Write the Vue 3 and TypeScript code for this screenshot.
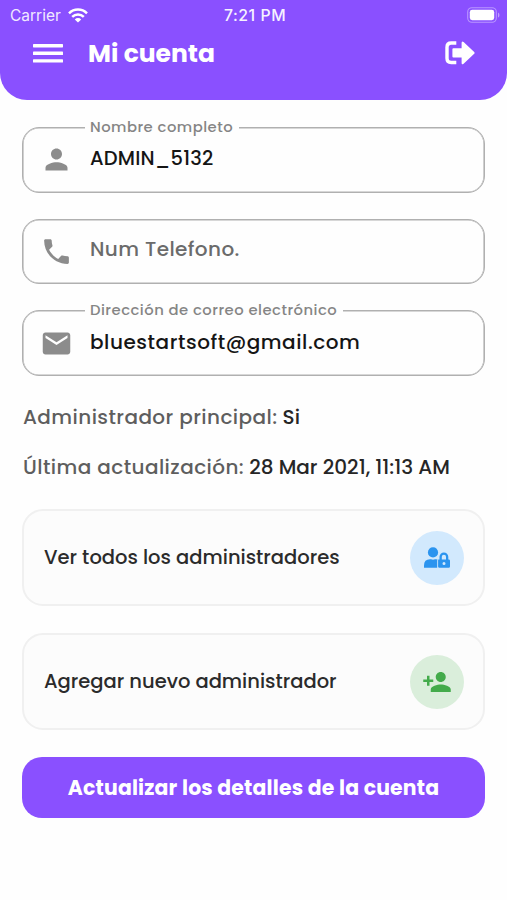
<script setup lang="ts">
interface Field {
  id: string
  label: string
  value: string
  icon: string
}

const fields: Field[] = [
  {
    id: 'name',
    label: 'Nombre completo',
    value: 'ADMIN_5132',
    icon: 'M12 12c2.21 0 4-1.79 4-4s-1.79-4-4-4-4 1.79-4 4 1.79 4 4 4zm0 2c-2.67 0-8 1.34-8 4v2h16v-2c0-2.66-5.33-4-8-4z',
  },
  {
    id: 'phone',
    label: 'Num Telefono.',
    value: '',
    icon: 'M6.62 10.79c1.44 2.83 3.76 5.14 6.59 6.59l2.2-2.2c.27-.27.67-.36 1.02-.24 1.12.37 2.33.57 3.57.57.55 0 1 .45 1 1V20c0 .55-.45 1-1 1-9.39 0-17-7.61-17-17 0-.55.45-1 1-1h3.5c.55 0 1 .45 1 1 0 1.25.2 2.45.57 3.57.11.35.03.74-.25 1.02l-2.2 2.2z',
  },
  {
    id: 'email',
    label: 'Dirección de correo electrónico',
    value: 'bluestartsoft@gmail.com',
    icon: 'M20 4H4c-1.1 0-1.99.9-1.99 2L2 18c0 1.1.9 2 2 2h16c1.1 0 2-.9 2-2V6c0-1.1-.9-2-2-2zm0 4l-8 5-8-5V6l8 5 8-5v2z',
  },
]
</script>

<template>
  <div class="screen">
    <header class="header">
      <div class="status">
        <div class="carrier">
          <span class="carrier-name">Carrier</span>
          <svg class="wifi" viewBox="0 0 20 15" fill="none" stroke="#fff" stroke-width="2.5">
            <path d="M1 5.3a12.8 12.8 0 0 1 18 0" />
            <path d="M4.2 8.9a8.3 8.3 0 0 1 11.6 0" />
            <path d="M10 14.6 6.8 11.4a4.6 4.6 0 0 1 6.4 0z" fill="#fff" stroke="none" />
          </svg>
        </div>
        <span class="clock">7:21 PM</span>
        <svg class="battery" viewBox="0 0 33 16">
          <rect x="0.7" y="0.7" width="28.6" height="14.6" rx="4.2" fill="none" stroke="#fff" stroke-opacity=".4" stroke-width="1.1" />
          <rect x="2.8" y="2.8" width="24.4" height="10.4" rx="2.4" fill="#fff" />
          <path d="M31 5.4c1.9.7 1.9 4.5 0 5.2z" fill="#fff" opacity=".45" />
        </svg>
      </div>
      <div class="bar">
        <svg class="menu" viewBox="0 0 30 19" fill="#fff">
          <rect width="30" height="3.4" y="0" rx=".6" />
          <rect width="30" height="3.4" y="7.6" rx=".6" />
          <rect width="30" height="3.4" y="15.2" rx=".6" />
        </svg>
        <h1 class="title">Mi cuenta</h1>
        <svg class="logout" viewBox="0 0 30 24">
          <path d="M11.3 2H6.2Q2 2 2 6.2v11.1q0 4.2 4.2 4.2h5.1" fill="none" stroke="#fff" stroke-width="3.4" />
          <path d="M8.4 7.3h8.2V2q0-2.5 2-1l10.6 10.1q.8.8 0 1.6L18.6 22.8q-2 1.5-2-1v-5.2H8.4q-1 0-1-1V8.3q0-1 1-1z" fill="#fff" />
        </svg>
      </div>
    </header>

    <main class="content">
      <div class="fields">
        <div v-for="f in fields" :key="f.id" class="field" :class="f.id">
          <span v-if="f.value" class="label">{{ f.label }}</span>
          <svg class="field-icon" viewBox="0 0 24 24"><path :d="f.icon" fill="#8c8c8c" /></svg>
          <span v-if="f.value" class="value">{{ f.value }}</span>
          <span v-else class="value placeholder">{{ f.label }}</span>
        </div>
      </div>

      <p class="info role"><span class="key">Administrador principal:</span><span class="data">Si</span></p>
      <p class="info updated"><span class="key">Última actualización:</span><span class="data">28 Mar 2021, 11:13 AM</span></p>

      <div class="cards">
        <div class="card view">
          <span class="card-text">Ver todos los administradores</span>
          <span class="badge blue">
            <svg width="26" height="22" viewBox="0 0 26 22" fill="#2b94ef">
              <circle cx="9" cy="5.4" r="5.1" />
              <path d="M0 20.7v-2.2q0-6.3 6-6.3h1q2 .9 4 0h1q.8 0 1.5.2-.3.6-.3 1.4v6.9z" />
              <path fill-rule="evenodd" d="M14.3 12.4h1.2V9.8a4.4 4.4 0 0 1 8.8 0v2.6h.4q1.3 0 1.3 1.3v5.7q0 1.3-1.3 1.3H15.400q-1.3 0-1.3-1.300v-5.700q0-1 .2-1.300zm3.500 0h4.200V9.800a2.100 2.100 0 0 0-4.200 0zm2.200 2.700a1.500 1.500 0 1 0 0 3 1.500 1.500 0 0 0 0-3z" />
            </svg>
          </span>
        </div>
        <div class="card add">
          <span class="card-text">Agregar nuevo administrador</span>
          <span class="badge green">
            <svg width="30" height="30" viewBox="0 0 24 24" fill="#43ab4b">
              <path d="M15 12c2.21 0 4-1.79 4-4s-1.79-4-4-4-4 1.79-4 4 1.79 4 4 4zm-9-2V7H4v3H1v2h3v3h2v-3h3v-2H6zm9 4c-2.67 0-8 1.34-8 4v2h16v-2c0-2.66-5.33-4-8-4z" />
            </svg>
          </span>
        </div>
      </div>

      <button class="submit" type="button"><span>Actualizar los detalles de la cuenta</span></button>
    </main>
  </div>
</template>

<style>
body {
  margin: 0;
  background: #fefefe;
}
</style>

<style scoped>
.screen {
  width: 507px;
  height: 900px;
  box-sizing: border-box;
  overflow: hidden;
  background: #fefefe;
  font-family: Poppins, Inter, sans-serif;
  white-space: nowrap;
}

.header {
  height: 100px;
  background: #8a50ff;
  border-radius: 0 0 27px 27px;
  color: #fff;
}

.status {
  display: grid;
  grid-template-columns: 1fr auto 1fr;
  align-items: center;
  height: 30px;
  padding: 0 7px 0 10px;
  font-family: Inter, sans-serif;
}

.carrier {
  display: flex;
  align-items: center;
  gap: 7px;
}

.carrier-name {
  width: 51px;
  font-size: 15.5px;
  opacity: 0.88;
}

.wifi {
  width: 20px;
  height: 15px;
}

.clock {
  font-size: 15.8px;
  font-weight: 500;
  letter-spacing: 0.55px;
  opacity: 0.93;
}

.battery {
  width: 33px;
  height: 16px;
  justify-self: end;
}

.bar {
  display: flex;
  align-items: center;
  height: 47px;
  padding: 0 32px 0 33px;
}

.menu {
  width: 30px;
  height: 19px;
}

.title {
  flex: 1;
  margin: 0 0 0 25px;
  font-size: 25px;
  line-height: 47px;
  font-weight: 700;
}

.logout {
  width: 30px;
  height: 24px;
  margin-top: -1px;
}

.content {
  padding: 27px 22px 0;
}

.fields {
  display: flex;
  flex-direction: column;
  gap: 26px;
}

.field {
  position: relative;
  display: flex;
  align-items: center;
  box-sizing: border-box;
  height: 65.7px;
  padding-left: 17px;
  border: 1px solid #b0b0b0;
  border-radius: 17px;
  box-shadow: inset 0 0 0 0.6px #b0b0b0;
}

.label {
  position: absolute;
  top: -10px;
  left: 62px;
  padding: 0 6px 0 5px;
  background: #fefefe;
  color: #858585;
  font-size: 14.8px;
  font-weight: 500;
  line-height: 18px;
  letter-spacing: 0.48px;
}

.field-icon {
  width: 33px;
  height: 33px;
}

.value {
  margin: -3px 0 0 17px;
  color: #151515;
  font-size: 20px;
  font-weight: 500;
  letter-spacing: 0.55px;
}

.name .value {
  font-size: 19.5px;
  letter-spacing: 0.2px;
}

.placeholder {
  margin-top: -5px;
  color: #6b6b6b;
  letter-spacing: 0.4px;
}

.info {
  display: flex;
  gap: 5px;
  height: 50px;
  margin: 0;
  padding-left: 1px;
  line-height: 51px;
  font-size: 20px;
}

.role {
  margin-top: 16px;
}

.key {
  color: #5e5e5e;
  font-weight: 500;
  letter-spacing: 0.42px;
}

.data {
  color: #262626;
  font-weight: 500;
}

.cards {
  display: flex;
  flex-direction: column;
  gap: 27px;
  margin-top: 17px;
}

.card {
  display: flex;
  align-items: center;
  justify-content: space-between;
  box-sizing: border-box;
  height: 97px;
  padding: 0 19px 0 20px;
  border: 2px solid #f0f0f0;
  border-radius: 21px;
  background: #fcfcfc;
}

.card-text {
  color: #2b2b2b;
  font-size: 19.5px;
  font-weight: 500;
}

.badge {
  display: flex;
  align-items: center;
  justify-content: center;
  width: 54px;
  height: 54px;
  border-radius: 50%;
}

.blue {
  background: #d2e9fd;
}

.green {
  background: #daeedb;
}

.submit {
  display: block;
  width: 463px;
  height: 61px;
  margin-top: 27px;
  padding: 0;
  border: 0;
  border-radius: 20px;
  background: #8a50ff;
  color: #fff;
  font-family: inherit;
  font-size: 20.4px;
  font-weight: 700;
  letter-spacing: 0.17px;
}
</style>
